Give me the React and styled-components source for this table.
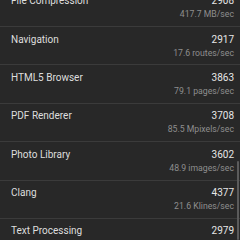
import styled, { createGlobalStyle } from "styled-components";

const GlobalStyle = createGlobalStyle`
  html, body {
    margin: 0;
    padding: 0;
    background: #282828;
  }
  body {
    font-family: Roboto, "Noto Sans", "Liberation Sans", sans-serif;
  }
`;

const workloads = [
  { name: "File Compression", score: 2908, rate: "417.7 MB/sec" },
  { name: "Navigation", score: 2917, rate: "17.6 routes/sec" },
  { name: "HTML5 Browser", score: 3863, rate: "79.1 pages/sec" },
  { name: "PDF Renderer", score: 3708, rate: "85.5 Mpixels/sec" },
  { name: "Photo Library", score: 3602, rate: "48.9 images/sec" },
  { name: "Clang", score: 4377, rate: "21.6 Klines/sec" },
  { name: "Text Processing", score: 2979, rate: "212.4 pages/sec" },
];

const Screen = styled.div`
  position: relative;
  width: 240px;
  height: 240px;
  overflow: hidden;
  background: #282828;
`;

const List = styled.ul`
  list-style: none;
  margin: -11.4px 0 0;
  padding: 0;
`;

const Row = styled.li`
  display: grid;
  grid-template-columns: 1fr auto;
  grid-template-rows: 14px 13px;
  align-items: center;
  height: 37.4px;
  padding: 5px 6px 0 11px;
  box-sizing: content-box;
  height: 32.4px;
  border-bottom: 1px solid #3b3b3b;
`;

const Name = styled.span`
  font-size: 10px;
  color: #dedede;
  white-space: nowrap;
`;

const Score = styled.span`
  font-size: 10px;
  color: #e6e6e6;
  text-align: right;
`;

const Rate = styled.span`
  grid-column: 2;
  font-size: 8.7px;
  color: #8e8e8e;
  text-align: right;
  white-space: nowrap;
`;

const ScrollThumb = styled.div`
  position: absolute;
  right: 1px;
  top: 161px;
  bottom: 0;
  width: 2.5px;
  border-radius: 2px;
  background: #5b5b5b;
`;

export default function App() {
  return (
    <Screen>
      <GlobalStyle />
      <List>
        {workloads.map((w) => (
          <Row key={w.name}>
            <Name>{w.name}</Name>
            <Score>{w.score}</Score>
            <Rate>{w.rate}</Rate>
          </Row>
        ))}
      </List>
      <ScrollThumb />
    </Screen>
  );
}
